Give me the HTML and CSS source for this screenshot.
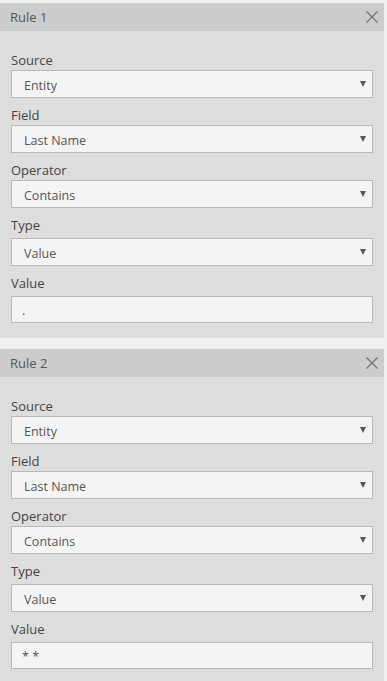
FILE: index.html
```html
<!DOCTYPE html>
<html lang="en">
  <head>
    <meta charset="UTF-8">
    <title>Rules</title>
    <link rel="stylesheet" href="styles.css">
  </head>
  <body>
    <section class="rule">
      <header class="rule-head">
        <span class="rule-title">Rule 1</span>
        <button class="rule-close" title="Remove rule">
          <svg width="12" height="12" viewBox="0 0 12 12"><path d="M0.5 0.5L11.5 11.5M11.5 0.5L0.5 11.5" stroke="#6f6f6f" stroke-width="1.1" fill="none"/></svg>
        </button>
      </header>
      <div class="rule-body">
        <label class="field-label">Source</label>
        <div class="select"><select><option>Entity</option></select></div>
        <label class="field-label">Field</label>
        <div class="select"><select><option>Last Name</option></select></div>
        <label class="field-label">Operator</label>
        <div class="select"><select><option>Contains</option></select></div>
        <label class="field-label spaced">Type</label>
        <div class="select"><select><option>Value</option></select></div>
        <label class="field-label spaced">Value</label>
        <input class="text-input" type="text" value=".">
      </div>
    </section>
    <section class="rule">
      <header class="rule-head">
        <span class="rule-title">Rule 2</span>
        <button class="rule-close" title="Remove rule">
          <svg width="12" height="12" viewBox="0 0 12 12"><path d="M0.5 0.5L11.5 11.5M11.5 0.5L0.5 11.5" stroke="#6f6f6f" stroke-width="1.1" fill="none"/></svg>
        </button>
      </header>
      <div class="rule-body">
        <label class="field-label">Source</label>
        <div class="select"><select><option>Entity</option></select></div>
        <label class="field-label">Field</label>
        <div class="select"><select><option>Last Name</option></select></div>
        <label class="field-label">Operator</label>
        <div class="select"><select><option>Contains</option></select></div>
        <label class="field-label spaced">Type</label>
        <div class="select"><select><option>Value</option></select></div>
        <label class="field-label spaced">Value</label>
        <input class="text-input" type="text" value="* *">
      </div>
    </section>
  </body>
</html>
```
FILE: styles.css
```css
* {
  box-sizing: border-box;
}
html, body {
  margin: 0;
}
body {
  background-color: #f0f0f0;
  font-family: 'Open Sans', 'Noto Sans', sans-serif;
  color: #444;
  padding: 3px 3px 0 0;
  display: flex;
  flex-direction: column;
  gap: 11px;
  overflow: hidden;
}
.rule {
  background-color: #dddddd;
}
.rule-head {
  height: 28px;
  background-color: #cccccc;
  display: flex;
  align-items: center;
  justify-content: space-between;
  padding: 0 6px 0 10px;
}
.rule-title {
  font-size: 13px;
  color: #555;
}
.rule-close {
  border: none;
  background: none;
  padding: 0;
  width: 12px;
  height: 12px;
  display: flex;
}
.rule-body {
  padding: 12px 11px 15px 11px;
  display: flex;
  flex-direction: column;
}
.field-label {
  display: block;
  font-size: 13px;
  line-height: 19px;
  padding-top: 8px;
  color: #444;
}
.field-label.spaced {
  margin-bottom: 3px;
}
.select {
  position: relative;
  height: 28px;
}
.select::after {
  content: "";
  position: absolute;
  right: 7px;
  top: 11px;
  border-left: 3px solid transparent;
  border-right: 3px solid transparent;
  border-top: 6px solid #555;
  pointer-events: none;
}
.select select, .text-input {
  appearance: none;
  -webkit-appearance: none;
  width: 100%;
  height: 100%;
  margin: 0;
  border: 1px solid #b8b8b8;
  border-radius: 0;
  background-color: #f4f4f4;
  font-family: 'Open Sans', 'Noto Sans', sans-serif;
  font-size: 12.5px;
  color: #555;
  padding: 2px 20px 0 12px;
  outline: none;
}
.text-input {
  height: 27px;
  padding-left: 10px;
}
```
